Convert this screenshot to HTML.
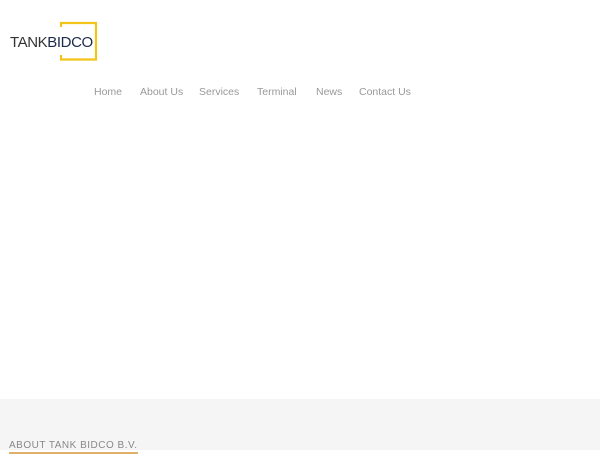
<!DOCTYPE html>
<html><head><meta charset="utf-8">
<style>
html,body{margin:0;padding:0;width:600px;height:450px;overflow:hidden;background:#fff;font-family:"Liberation Sans",sans-serif}
.logo{position:absolute;left:10px;top:34px;font-size:15px;letter-spacing:-0.4px;color:#333;line-height:17px}
.logo b{font-weight:normal;color:#1e2a4a}
nav{position:absolute;top:86px;left:0;font-size:10.5px;color:#999}
nav span{position:absolute;white-space:nowrap}
.sec{position:absolute;left:0;top:399px;width:600px;height:51px;background:#f5f5f5}
.about{position:absolute;left:9px;top:440px;font-size:10px;letter-spacing:0.5px;color:#888;border-bottom:2px solid #e0b06a;line-height:12px}
</style></head><body>
<svg width="600" height="80" style="position:absolute;left:0;top:0">
<path d="M61 27 V23 H96 V59.5 H61 V55" fill="none" stroke="#f0c419" stroke-width="2.2"/>
</svg>
<div class="logo">TANK<b>BIDCO</b></div>
<nav>
<span style="left:94px">Home</span>
<span style="left:140px">About Us</span>
<span style="left:199px">Services</span>
<span style="left:257px">Terminal</span>
<span style="left:316px">News</span>
<span style="left:359px">Contact Us</span>
</nav>
<div class="sec"></div>
<div class="about">ABOUT TANK BIDCO B.V.</div>
</body></html>
